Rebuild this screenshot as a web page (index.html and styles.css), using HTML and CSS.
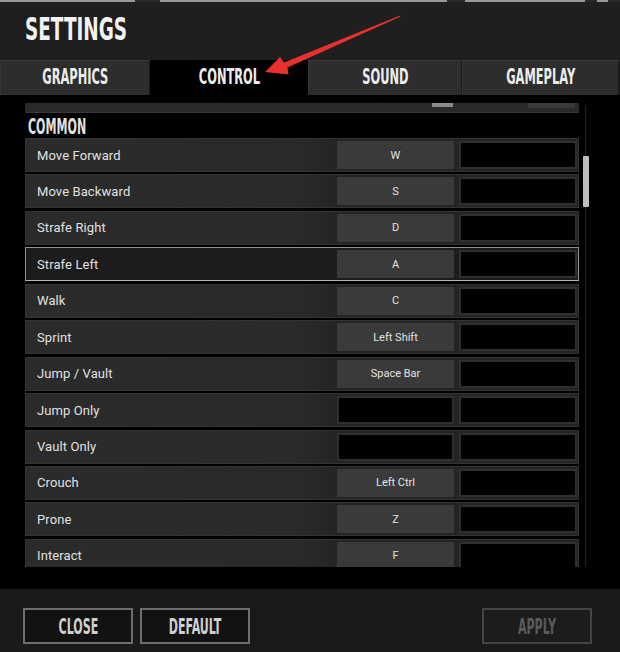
FILE: index.html
```html
<!DOCTYPE html>
<html lang="en">
<head>
<meta charset="utf-8">
<title>Settings</title>
<link rel="stylesheet" href="styles.css">
</head>
<body>
<div class="page">
  <div class="header">
    <div class="top-strip"></div>
    <h1 class="title"><span class="cond">SETTINGS</span></h1>
  </div>
  <div class="tabs">
    <div class="tab"><span class="cond">GRAPHICS</span></div>
    <div class="tab active"><span class="cond">CONTROL</span></div>
    <div class="tab"><span class="cond">SOUND</span></div>
    <div class="tab last"><span class="cond">GAMEPLAY</span></div>
  </div>
  <div class="main">
    <div class="viewport">
      <div class="prev-row"><span class="tick"></span><span class="seg"></span></div>
      <div class="section-title"><span class="cond">COMMON</span></div>
      <div class="rows">
        <div class="row"><span class="label">Move Forward</span><span class="key">W</span><span class="key2"></span></div>
        <div class="row"><span class="label">Move Backward</span><span class="key">S</span><span class="key2"></span></div>
        <div class="row"><span class="label">Strafe Right</span><span class="key">D</span><span class="key2"></span></div>
        <div class="row selected"><span class="label">Strafe Left</span><span class="key">A</span><span class="key2"></span></div>
        <div class="row"><span class="label">Walk</span><span class="key">C</span><span class="key2"></span></div>
        <div class="row"><span class="label">Sprint</span><span class="key">Left Shift</span><span class="key2"></span></div>
        <div class="row"><span class="label">Jump / Vault</span><span class="key">Space Bar</span><span class="key2"></span></div>
        <div class="row"><span class="label">Jump Only</span><span class="key empty"></span><span class="key2"></span></div>
        <div class="row"><span class="label">Vault Only</span><span class="key empty"></span><span class="key2"></span></div>
        <div class="row"><span class="label">Crouch</span><span class="key">Left Ctrl</span><span class="key2"></span></div>
        <div class="row"><span class="label">Prone</span><span class="key">Z</span><span class="key2"></span></div>
        <div class="row"><span class="label">Interact</span><span class="key">F</span><span class="key2"></span></div>
      </div>
    </div>
    <div class="scrollbar"><div class="thumb"></div></div>
  </div>
  <div class="footer">
    <button class="btn"><span class="cond">CLOSE</span></button>
    <button class="btn"><span class="cond">DEFAULT</span></button>
    <button class="btn disabled"><span class="cond">APPLY</span></button>
  </div>
  <svg class="arrow" width="620" height="100" viewBox="0 0 620 100" aria-hidden="true">
    <polygon points="265,72 280,57 284,62.5 400,15.4 400.6,16.6 287.5,67.5 288.5,74.5" fill="#e8302d"/>
  </svg>
</div>
</body>
</html>
```

FILE: styles.css
```css
* { box-sizing: border-box; }
html, body { margin: 0; padding: 0; }
body {
  background: #000;
  width: 620px;
  height: 652px;
  overflow: hidden;
  font-family: Roboto, "Liberation Sans", sans-serif;
}
.page { position: relative; width: 620px; height: 652px; }

.cond {
  display: inline-block;
  font-family: "DejaVu Sans Condensed", "DejaVu Sans", sans-serif;
  font-weight: bold;
  white-space: nowrap;
}

/* header */
.header {
  height: 60px;
  background: #1f1f1f;
}
.top-strip {
  height: 2px;
  background: linear-gradient(90deg,
    #9a9a9a 0, #9a9a9a 135px, #2a2a2a 135px, #2a2a2a 160px,
    #9a9a9a 160px, #9a9a9a 447px, #2a2a2a 447px, #2a2a2a 465px,
    #9a9a9a 465px, #9a9a9a 585px, #2a2a2a 585px, #2a2a2a 597px,
    #9a9a9a 597px, #9a9a9a 608px, #2a2a2a 608px);
}
.title {
  margin: 0;
  padding: 11px 0 0 25px;
  font-size: 31.5px;
  line-height: 32px;
  color: #f2f2f2;
  font-weight: bold;
}
.title .cond { transform: scaleX(0.65); transform-origin: left center; }

/* tabs */
.tabs {
  display: grid;
  grid-template-columns: 150px 158px 154px 1fr;
  height: 35px;
}
.tab {
  display: flex;
  align-items: center;
  justify-content: center;
  background: #2d2d2d;
  border-top: 1px solid #3b3b3b;
  border-left: 1px solid #353535;
  border-right: 1px solid #1a1a1a;
  color: #ececec;
  font-size: 20.5px;
  padding-bottom: 2px;
}
.tab .cond { transform: scaleX(0.62); transform-origin: center; }
.tab.active { background: #000; border-color: #000; }
.tab.last { border-right: 2px solid #1a1a1a; }

/* main list */
.main {
  height: 494px;
  background: #000;
  display: flex;
  padding: 8px 0 0 25px;
}
.viewport {
  width: 554px;
  height: 464px;
  overflow: hidden;
}
.prev-row {
  height: 10px;
  background: #2a2a2a;
  border-bottom: 1px solid #383838;
  display: flex;
  align-items: flex-start;
}
.tick { margin-left: 407px; width: 21px; height: 4px; background: #8a8a8a; }
.seg { margin-left: 75px; width: 47px; height: 5px; background: #3a3a3a; }

.section-title {
  height: 25px;
  line-height: 28px;
  padding-left: 3px;
  font-size: 20.5px;
  color: #e2e2e2;
}
.section-title .cond { transform: scaleX(0.6); transform-origin: left center; }

.rows { display: flex; flex-direction: column; gap: 2.45px; }
.row {
  flex: none;
  height: 34px;
  display: flex;
  align-items: center;
  background: linear-gradient(90deg, #2b2b2b 0, #2a2a2a 270px, #242424 310px, #242424 100%);
  border: 1px solid #333;
}
.row.selected {
  background: #1c1c1c;
  border: 1px solid #8f8f8f;
  border-bottom-color: #b5b5b5;
}
.label {
  flex: 1;
  padding-left: 11px;
  font-size: 13px;
  color: #e0e0e0;
  letter-spacing: 0.1px;
}
.key {
  width: 117px;
  height: 28px;
  background: #3a3a3a;
  display: flex;
  align-items: center;
  justify-content: center;
  font-size: 11px;
  font-weight: 400;
  color: #e2e2e2;
}
.key.empty { background: #000; border: 2px solid #2f2f2f; }
.key2 {
  width: 118px;
  height: 28px;
  margin-left: 5px;
  margin-right: 1px;
  background: #000;
  border: 2px solid #2f2f2f;
}

.scrollbar {
  width: 6px;
  height: 462px;
  margin: 2px 0 0 4px;
  background: linear-gradient(90deg, transparent 2.5px, #262626 2.5px, #262626 3.5px, transparent 3.5px);
}
.thumb {
  margin-top: 51px;
  height: 51px;
  background: #bdbdbd;
  border-radius: 1px;
}

/* footer */
.footer {
  height: 63px;
  background: #1a1a1a;
  display: flex;
  align-items: flex-start;
  gap: 7px;
  padding: 19px 28px 0 23px;
}
.btn {
  width: 110px;
  height: 36px;
  background: #121212;
  border: 2px solid #6e6e6e;
  color: #cfcfcf;
  font-size: 22px;
  padding: 0;
  display: flex;
  align-items: center;
  justify-content: center;
}
.btn .cond { transform: scaleX(0.56); transform-origin: center; }
.btn.disabled {
  margin-left: auto;
  background: #1c1c1c;
  border-color: #444;
  color: #5a5a5a;
}

.arrow {
  position: absolute;
  top: 0;
  left: 0;
  pointer-events: none;
}
```
